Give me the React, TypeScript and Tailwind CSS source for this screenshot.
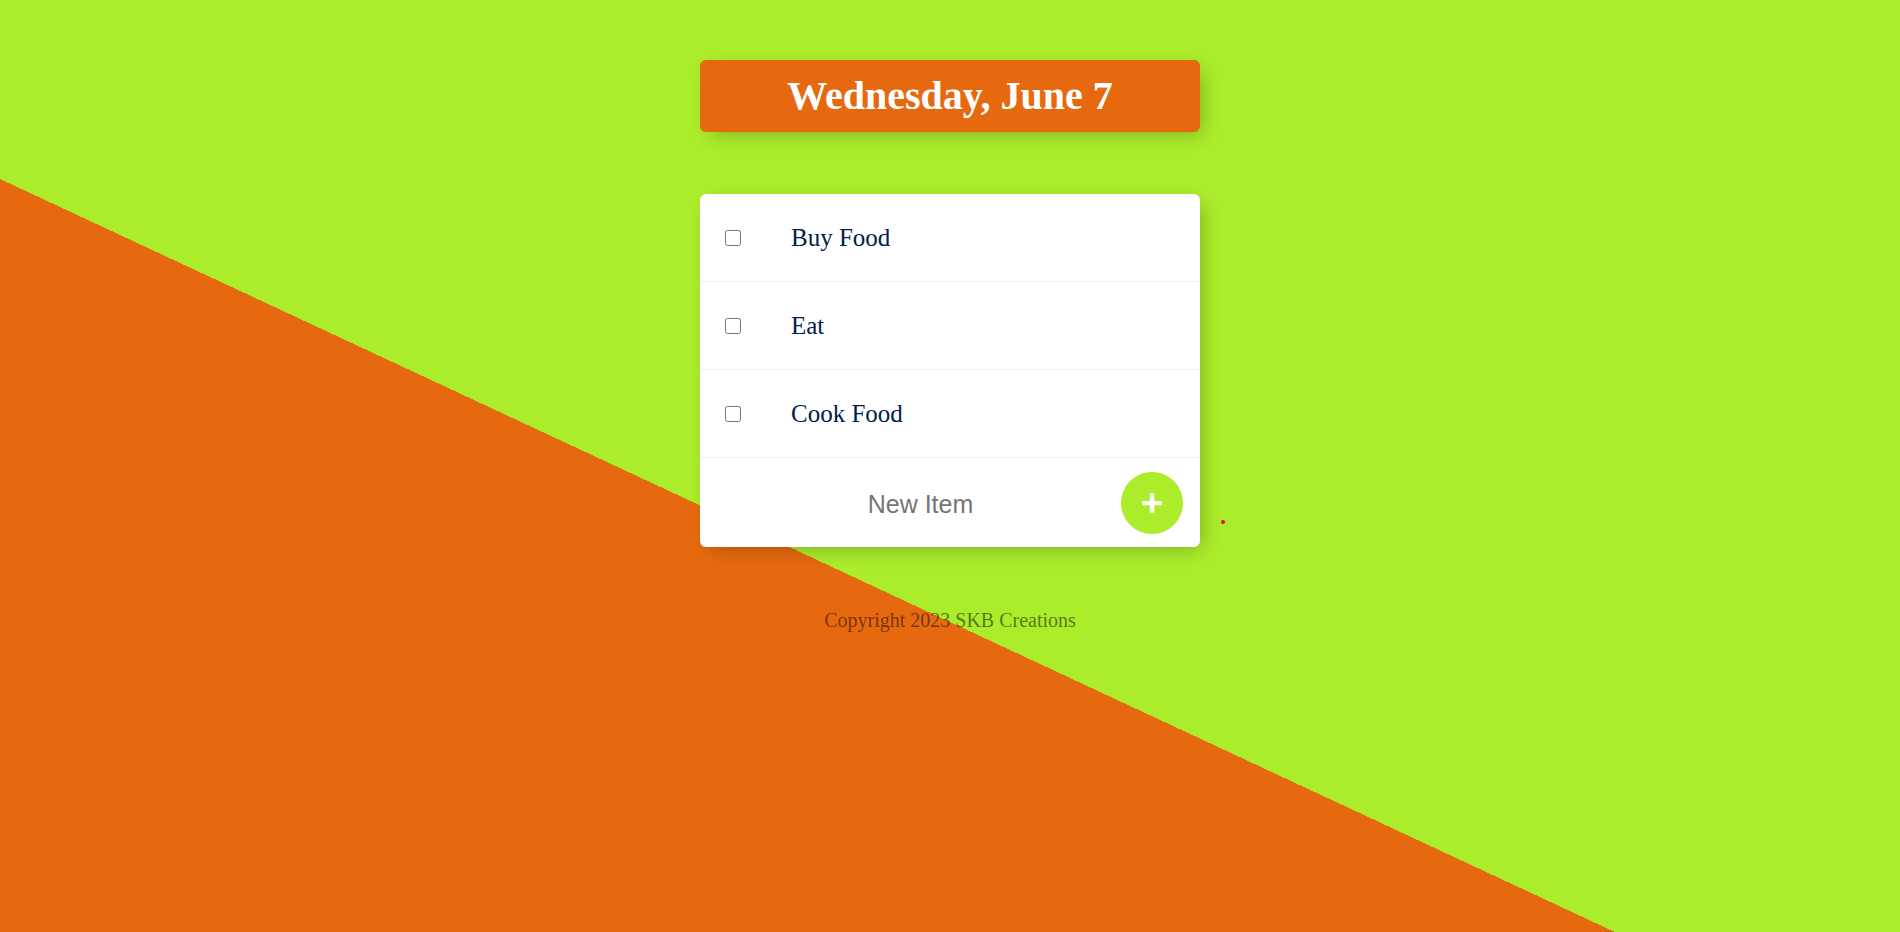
import React from 'react';

const items = ['Buy Food', 'Eat', 'Cook Food'];

export default function App() {
  return (
    <div className="min-h-[1244px] bg-[linear-gradient(25deg,#e6690f_50%,#abec2b_50%)] font-['Liberation_Serif',serif]">
      <div className="pt-[60px]">
        <div className="w-[500px] mx-auto rounded-[6px] bg-[#e6690f] shadow-[6px_6px_19px_-6px_rgba(0,0,0,0.3)]">
          <h1 className="text-center text-white font-bold text-[40px] leading-[46px] py-[13px]">
            Wednesday, June 7
          </h1>
        </div>

        <div className="relative w-[500px] mx-auto mt-[62px] rounded-[6px] bg-white shadow-[6px_6px_19px_-6px_rgba(0,0,0,0.3)]">
          {items.map((item) => (
            <div key={item} className="flex items-center h-[88px] border-b border-[#f1f1f1]">
              <input type="checkbox" className="w-4 h-4 ml-[25px] mr-[25px]" />
              <p className="px-[25px] text-[25px] text-[#00204a]">{item}</p>
            </div>
          ))}
          <div className="flex items-center h-[89px] pl-[25px]">
            <input
              type="text"
              placeholder="New Item"
              className="w-[391px] h-[75px] pt-[4px] text-center text-[25px] font-['Liberation_Sans',sans-serif] placeholder:text-[#757575] outline-none"
            />
            <button className="ml-[5px] w-[62px] h-[62px] rounded-full bg-[#abec2b] text-white text-[38px] leading-none font-bold font-['Liberation_Sans',sans-serif] flex items-center justify-center">
              +
            </button>
          </div>
          <span className="absolute right-[-25px] top-[326px] w-[4px] h-[4px] rounded-full bg-[#e01010]" />
        </div>

        <footer className="mt-[58px] text-center text-[20px] text-black/50">
          Copyright 2023 SKB Creations
        </footer>
      </div>
    </div>
  );
}
